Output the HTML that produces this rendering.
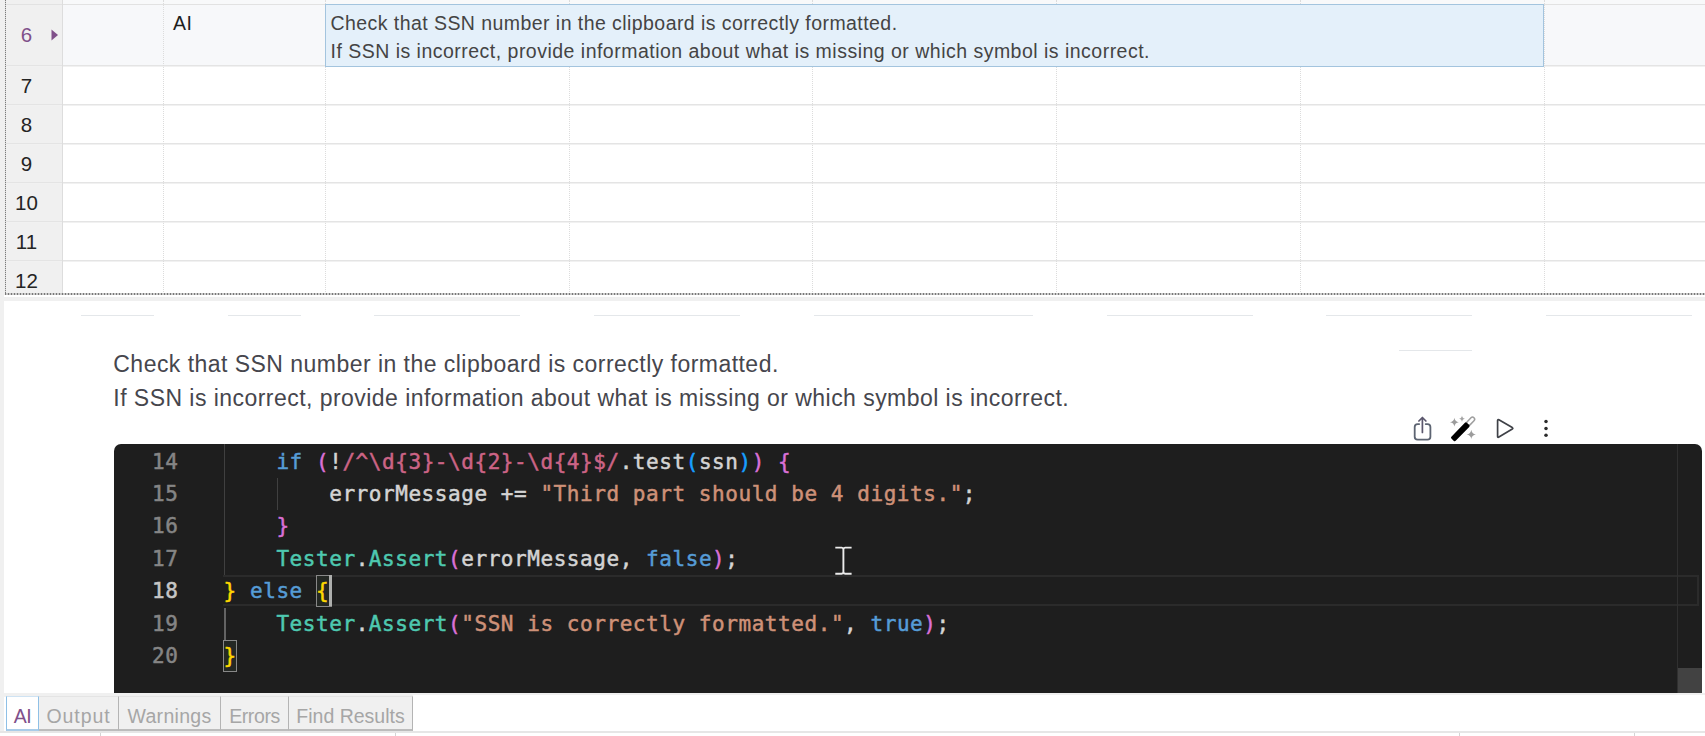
<!DOCTYPE html>
<html lang="en">
<head>
<meta charset="utf-8">
<title>AI Command</title>
<style>
html,body{margin:0;padding:0;}
body{width:1705px;height:736px;position:relative;overflow:hidden;background:#fff;
  font-family:"Liberation Sans",sans-serif;color:#1e1e1e;}
.abs{position:absolute;}
/* ---------- grid ---------- */
#grid{left:0;top:0;width:1705px;height:301px;background:#f0f0f0;}
#gridwhite{left:63px;top:66px;width:1642px;height:228px;background:#fff;}
#row6bg{left:63px;top:5px;width:1642px;height:61px;background:#f7f8fa;}
#topstrip{left:63px;top:0;width:1642px;height:4px;background:#f8f9fa;}
.hl{left:6px;width:1699px;height:1px;background:#e2e2e2;}
.vl{top:0;width:0;height:294px;border-left:1px dotted #dcdcdc;}
#hdrline{left:62px;top:0;width:1px;height:294px;background:#dddddd;}
.rn{left:6.5px;width:40px;text-align:center;font-size:20.5px;line-height:24px;color:#242424;}
#leftdots{left:5px;top:0;width:1px;height:294px;background:repeating-linear-gradient(180deg,#7c7c7c 0,#7c7c7c 1px,#d8d8d8 1px,#d8d8d8 2px);}
#botdots{left:5px;top:293px;width:1700px;height:2px;background:repeating-linear-gradient(90deg,#787878 0,#787878 1px,#cacaca 1px,#cacaca 3px);}
#sel{left:325px;top:4px;width:1217px;height:60.6px;background:#e4f0fa;border:1px solid #a3c4de;}
.celltxt{font-size:19.5px;line-height:28px;color:#444;white-space:nowrap;letter-spacing:0.44px;}
/* ---------- AI panel ---------- */
#panel{left:4px;top:301px;width:1701px;height:394px;background:#fff;}
.faint{height:1px;background:#e4e7ea;top:315px;}
.ptxt{left:113.3px;font-size:23px;line-height:34px;color:#46464d;white-space:nowrap;letter-spacing:0.43px;}
#code{left:114px;top:444px;width:1588px;height:249px;background:#1e1e1e;border-radius:7px 7px 0 0;overflow:hidden;}
.ln{left:0;width:64.5px;text-align:right;color:#858585;}
.cl{font-family:"DejaVu Sans Mono","Liberation Mono",monospace;font-size:21px;letter-spacing:0.558px;line-height:32.4px;height:32.4px;white-space:pre;-webkit-text-stroke:0.5px currentColor;}
.ct{left:109.6px;color:#d4d4d4;}
.k{color:#569cd6}.t{color:#4ec9b0}.s{color:#ce9178}.r{color:#cc6486}.p{color:#da70d6}.y{color:#ffd700}.b{color:#179fff}.v{color:#d4d4d4}
/* ---------- tabs ---------- */
#tabs{left:0;top:693px;width:1705px;height:43px;background:#fff;}
.tab{top:696px;height:35px;box-sizing:border-box;border:1px solid #b4b4b4;border-left:none;border-top-color:#e4e4e4;border-bottom:2px solid #bcbcbc;background:#f0f0f0;color:#a6a6a6;font-size:19.5px;line-height:38px;text-align:center;white-space:nowrap;}
.tick{top:733px;width:1px;height:3px;background:#d4d4d4;}
</style>
</head>
<body>
<!-- GRID -->
<div id="grid" class="abs"></div>
<div id="topstrip" class="abs"></div>
<div id="row6bg" class="abs"></div>
<div id="gridwhite" class="abs"></div>
<div class="abs hl" style="top:4px"></div>
<div class="abs hl" style="top:65px;height:2px;background:linear-gradient(180deg,#e4e4e4 0,#e4e4e4 1px,#f1f1f1 1px,#f1f1f1 2px)"></div>
<div class="abs hl" style="top:104px;height:2px;background:linear-gradient(180deg,#e4e4e4 0,#e4e4e4 1px,#f1f1f1 1px,#f1f1f1 2px)"></div>
<div class="abs hl" style="top:143px;height:2px;background:linear-gradient(180deg,#e4e4e4 0,#e4e4e4 1px,#f1f1f1 1px,#f1f1f1 2px)"></div>
<div class="abs hl" style="top:182px;height:2px;background:linear-gradient(180deg,#e4e4e4 0,#e4e4e4 1px,#f1f1f1 1px,#f1f1f1 2px)"></div>
<div class="abs hl" style="top:221px;height:2px;background:linear-gradient(180deg,#e4e4e4 0,#e4e4e4 1px,#f1f1f1 1px,#f1f1f1 2px)"></div>
<div class="abs hl" style="top:260px;height:2px;background:linear-gradient(180deg,#e4e4e4 0,#e4e4e4 1px,#f1f1f1 1px,#f1f1f1 2px)"></div>
<div id="hdrline" class="abs"></div>
<div class="abs vl" style="left:163px"></div>
<div class="abs vl" style="left:325px"></div>
<div class="abs vl" style="left:569px"></div>
<div class="abs vl" style="left:812px"></div>
<div class="abs vl" style="left:1056px"></div>
<div class="abs vl" style="left:1300px"></div>
<div class="abs vl" style="left:1544px"></div>
<div id="leftdots" class="abs"></div>
<div class="abs" style="left:4px;top:295px;width:1701px;height:2px;background:#fff"></div>
<div id="botdots" class="abs"></div>
<div class="abs rn" style="top:23px;color:#80508a">6</div>
<svg class="abs" style="left:51px;top:29px" width="8" height="12" viewBox="0 0 8 12"><path d="M0.5 0.5 L7 6 L0.5 11.5 Z" fill="#80508a"/></svg>
<div class="abs rn" style="top:74px">7</div>
<div class="abs rn" style="top:113px">8</div>
<div class="abs rn" style="top:152px">9</div>
<div class="abs rn" style="top:191px">10</div>
<div class="abs rn" style="top:230px">11</div>
<div class="abs rn" style="top:269px">12</div>
<div class="abs celltxt" style="left:173px;top:9px;color:#1e1e1e">AI</div>
<div id="sel" class="abs"></div>
<div class="abs celltxt" style="left:330.5px;top:9px">Check that SSN number in the clipboard is correctly formatted.</div>
<div class="abs celltxt" style="left:330.5px;top:37px;letter-spacing:0.485px">If SSN is incorrect, provide information about what is missing or which symbol is incorrect.</div>

<!-- AI PANEL -->
<div id="panel" class="abs"></div>
<div class="abs faint" style="left:81px;width:73px"></div>
<div class="abs faint" style="left:228px;width:73px"></div>
<div class="abs faint" style="left:374px;width:146px"></div>
<div class="abs faint" style="left:594px;width:146px"></div>
<div class="abs faint" style="left:814px;width:219px"></div>
<div class="abs faint" style="left:1107px;width:146px"></div>
<div class="abs faint" style="left:1326px;width:146px"></div>
<div class="abs faint" style="left:1546px;width:146px"></div>
<div class="abs faint" style="left:1399px;width:73px;top:350px"></div>
<div class="abs ptxt" style="top:347px;letter-spacing:0.465px">Check that SSN number in the clipboard is correctly formatted.</div>
<div class="abs ptxt" style="top:381px;letter-spacing:0.455px">If SSN is incorrect, provide information about what is missing or which symbol is incorrect.</div>

<!-- CODE -->
<svg class="abs" style="left:1405px;top:410px" width="160" height="34" viewBox="0 0 160 34" fill="none">
  <!-- share -->
  <path d="M14.2 14.1 H12.6 Q9.7 14.1 9.7 17 V26.8 Q9.7 29.7 12.6 29.7 H22.5 Q25.4 29.7 25.4 26.8 V17 Q25.4 14.1 22.5 14.1 H20.7" stroke="#5d6472" stroke-width="1.8" stroke-linecap="round"/>
  <path d="M17.4 22.4 V8 M13.9 11 L17.4 7.5 L20.9 11" stroke="#5a566c" stroke-width="1.7" stroke-linecap="round" stroke-linejoin="round"/>
  <!-- wand -->
  <g transform="translate(48.6 28.7) rotate(-45.8)">
    <rect x="19.6" y="-2.1" width="9.6" height="4.2" rx="2.1" stroke="#9e9e9e" stroke-width="1.5" fill="#fff"/>
    <rect x="-1.4" y="-3" width="22" height="6" rx="1.3" fill="#000"/>
  </g>
  <path d="M49.4 7.8 Q49.9 11.7 53.8 12.2 Q49.9 12.7 49.4 16.6 Q48.9 12.7 45 12.2 Q48.9 11.7 49.4 7.8 Z" fill="#9c9c9c"/>
  <path d="M57 5.6 Q57.3 8.5 60.2 8.8 Q57.3 9.1 57 12 Q56.7 9.1 53.8 8.8 Q56.7 8.5 57 5.6 Z" fill="#a4a4a4"/>
  <path d="M66.3 19.8 Q66.8 23.9 70.9 24.4 Q66.8 24.9 66.3 29 Q65.8 24.9 61.7 24.4 Q65.8 23.9 66.3 19.8 Z" fill="#9c9c9c"/>
  <!-- play -->
  <path d="M92.6 10.6 Q92.6 9.2 93.9 9.8 L107.3 17.6 Q108.4 18.3 107.3 19 L93.9 27.1 Q92.6 27.8 92.6 26.4 Z" stroke="#3f4147" stroke-width="1.7" stroke-linejoin="round"/>
  <!-- dots -->
  <circle cx="141" cy="11.6" r="1.75" fill="#2b2b2b"/><circle cx="141" cy="18.4" r="1.75" fill="#2b2b2b"/><circle cx="141" cy="25.3" r="1.75" fill="#2b2b2b"/>
</svg>
<div id="code" class="abs">
  <div class="abs" style="left:109px;top:131.4px;width:1476px;height:30.8px;box-sizing:border-box;border:2px solid #2b2b2b;border-left:none;"></div>
  <div class="abs" style="left:1563px;top:0;width:1px;height:249px;background:#303030"></div>
  <div class="abs" style="left:1564px;top:224px;width:24px;height:25px;background:#424242"></div>
  <div class="abs" style="left:110px;top:0;width:1px;height:131.2px;background:#404040"></div>
  <div class="abs" style="left:162.6px;top:34.0px;width:1px;height:32.4px;background:#404040"></div>
  <div class="abs" style="left:109.8px;top:163.6px;width:2px;height:32.4px;background:#636363"></div>
  <div class="abs" style="left:202.2px;top:131.0px;width:15.4px;height:31.6px;box-sizing:border-box;border:1px solid #888;background:#242824"></div>
  <div class="abs" style="left:109.2px;top:195.8px;width:13.8px;height:31.8px;box-sizing:border-box;border:1px solid #888;background:#242824"></div>
  <div class="abs" style="left:214.6px;top:131.2px;width:3.2px;height:31.2px;background:#aeafad"></div>
  <div class="abs cl ln" style="top:1.6px">14</div>
  <div class="abs cl ln" style="top:34.0px">15</div>
  <div class="abs cl ln" style="top:66.4px">16</div>
  <div class="abs cl ln" style="top:98.8px">17</div>
  <div class="abs cl ln" style="top:131.2px;color:#c6c6c6">18</div>
  <div class="abs cl ln" style="top:163.6px">19</div>
  <div class="abs cl ln" style="top:196.0px">20</div>
  <div class="abs cl ct" style="top:1.6px">    <span class="k">if</span> <span class="p">(</span>!<span class="r">/^\d{3}-\d{2}-\d{4}$/</span>.test<span class="b">(</span>ssn<span class="b">)</span><span class="p">)</span> <span class="p">{</span></div>
  <div class="abs cl ct" style="top:34.0px">        errorMessage += <span class="s">"Third part should be 4 digits."</span>;</div>
  <div class="abs cl ct" style="top:66.4px">    <span class="p">}</span></div>
  <div class="abs cl ct" style="top:98.8px">    <span class="t">Tester</span>.<span class="t">Assert</span><span class="p">(</span>errorMessage, <span class="k">false</span><span class="p">)</span>;</div>
  <div class="abs cl ct" style="top:131.2px"><span class="y">}</span> <span class="k">else</span> <span class="y">{</span></div>
  <div class="abs cl ct" style="top:163.6px">    <span class="t">Tester</span>.<span class="t">Assert</span><span class="p">(</span><span class="s">"SSN is correctly formatted."</span>, <span class="k">true</span><span class="p">)</span>;</div>
  <div class="abs cl ct" style="top:196.0px"><span class="y">}</span></div>
  <svg class="abs" style="left:720px;top:100px" width="20" height="34" viewBox="0 0 20 34" fill="none" stroke="#ececec" stroke-width="1.9">
    <path d="M1.3 3.6 H7.6 Q9.4 3.8 9.4 5.4 Q9.4 3.8 11.2 3.6 H17.6 M9.4 5 V28.4 M1.3 29.8 H7.6 Q9.4 29.6 9.4 28 Q9.4 29.6 11.2 29.8 H17.6"/>
  </svg>
</div>

<!-- TABS -->
<div id="tabs" class="abs"></div>
<div class="abs" style="left:0;top:693px;width:1705px;height:2px;background:#f0f0f0"></div>
<div class="abs" style="left:0;top:301px;width:4px;height:430px;background:#f0f0f0"></div>
<div class="abs" style="left:4px;top:693px;width:409px;height:4px;background:#f0f0f0"></div>
<div class="abs tab" style="left:6px;width:33px;background:#fff;border:1px solid #8fc0e6;border-top-color:#cfe3f3;border-bottom:2px solid #a9cce8;color:#80508a"><span id="t0" style="letter-spacing:-0.5px">AI</span></div>
<div class="abs tab" style="left:39px;width:80px"><span id="t1" style="letter-spacing:0.9px">Output</span></div>
<div class="abs tab" style="left:119px;width:102px"><span id="t2" style="letter-spacing:0.3px">Warnings</span></div>
<div class="abs tab" style="left:221px;width:68px"><span id="t3" style="letter-spacing:-0.4px">Errors</span></div>
<div class="abs tab" style="left:289px;width:124px"><span id="t4">Find Results</span></div>
<div class="abs" style="left:0;top:731px;width:1705px;height:2px;background:#e6e6e6"></div>
<div class="abs tick" style="left:100px"></div>
<div class="abs tick" style="left:395px"></div>
<div class="abs tick" style="left:1459px"></div>
<div class="abs tick" style="left:1634px"></div>
</body>
</html>
